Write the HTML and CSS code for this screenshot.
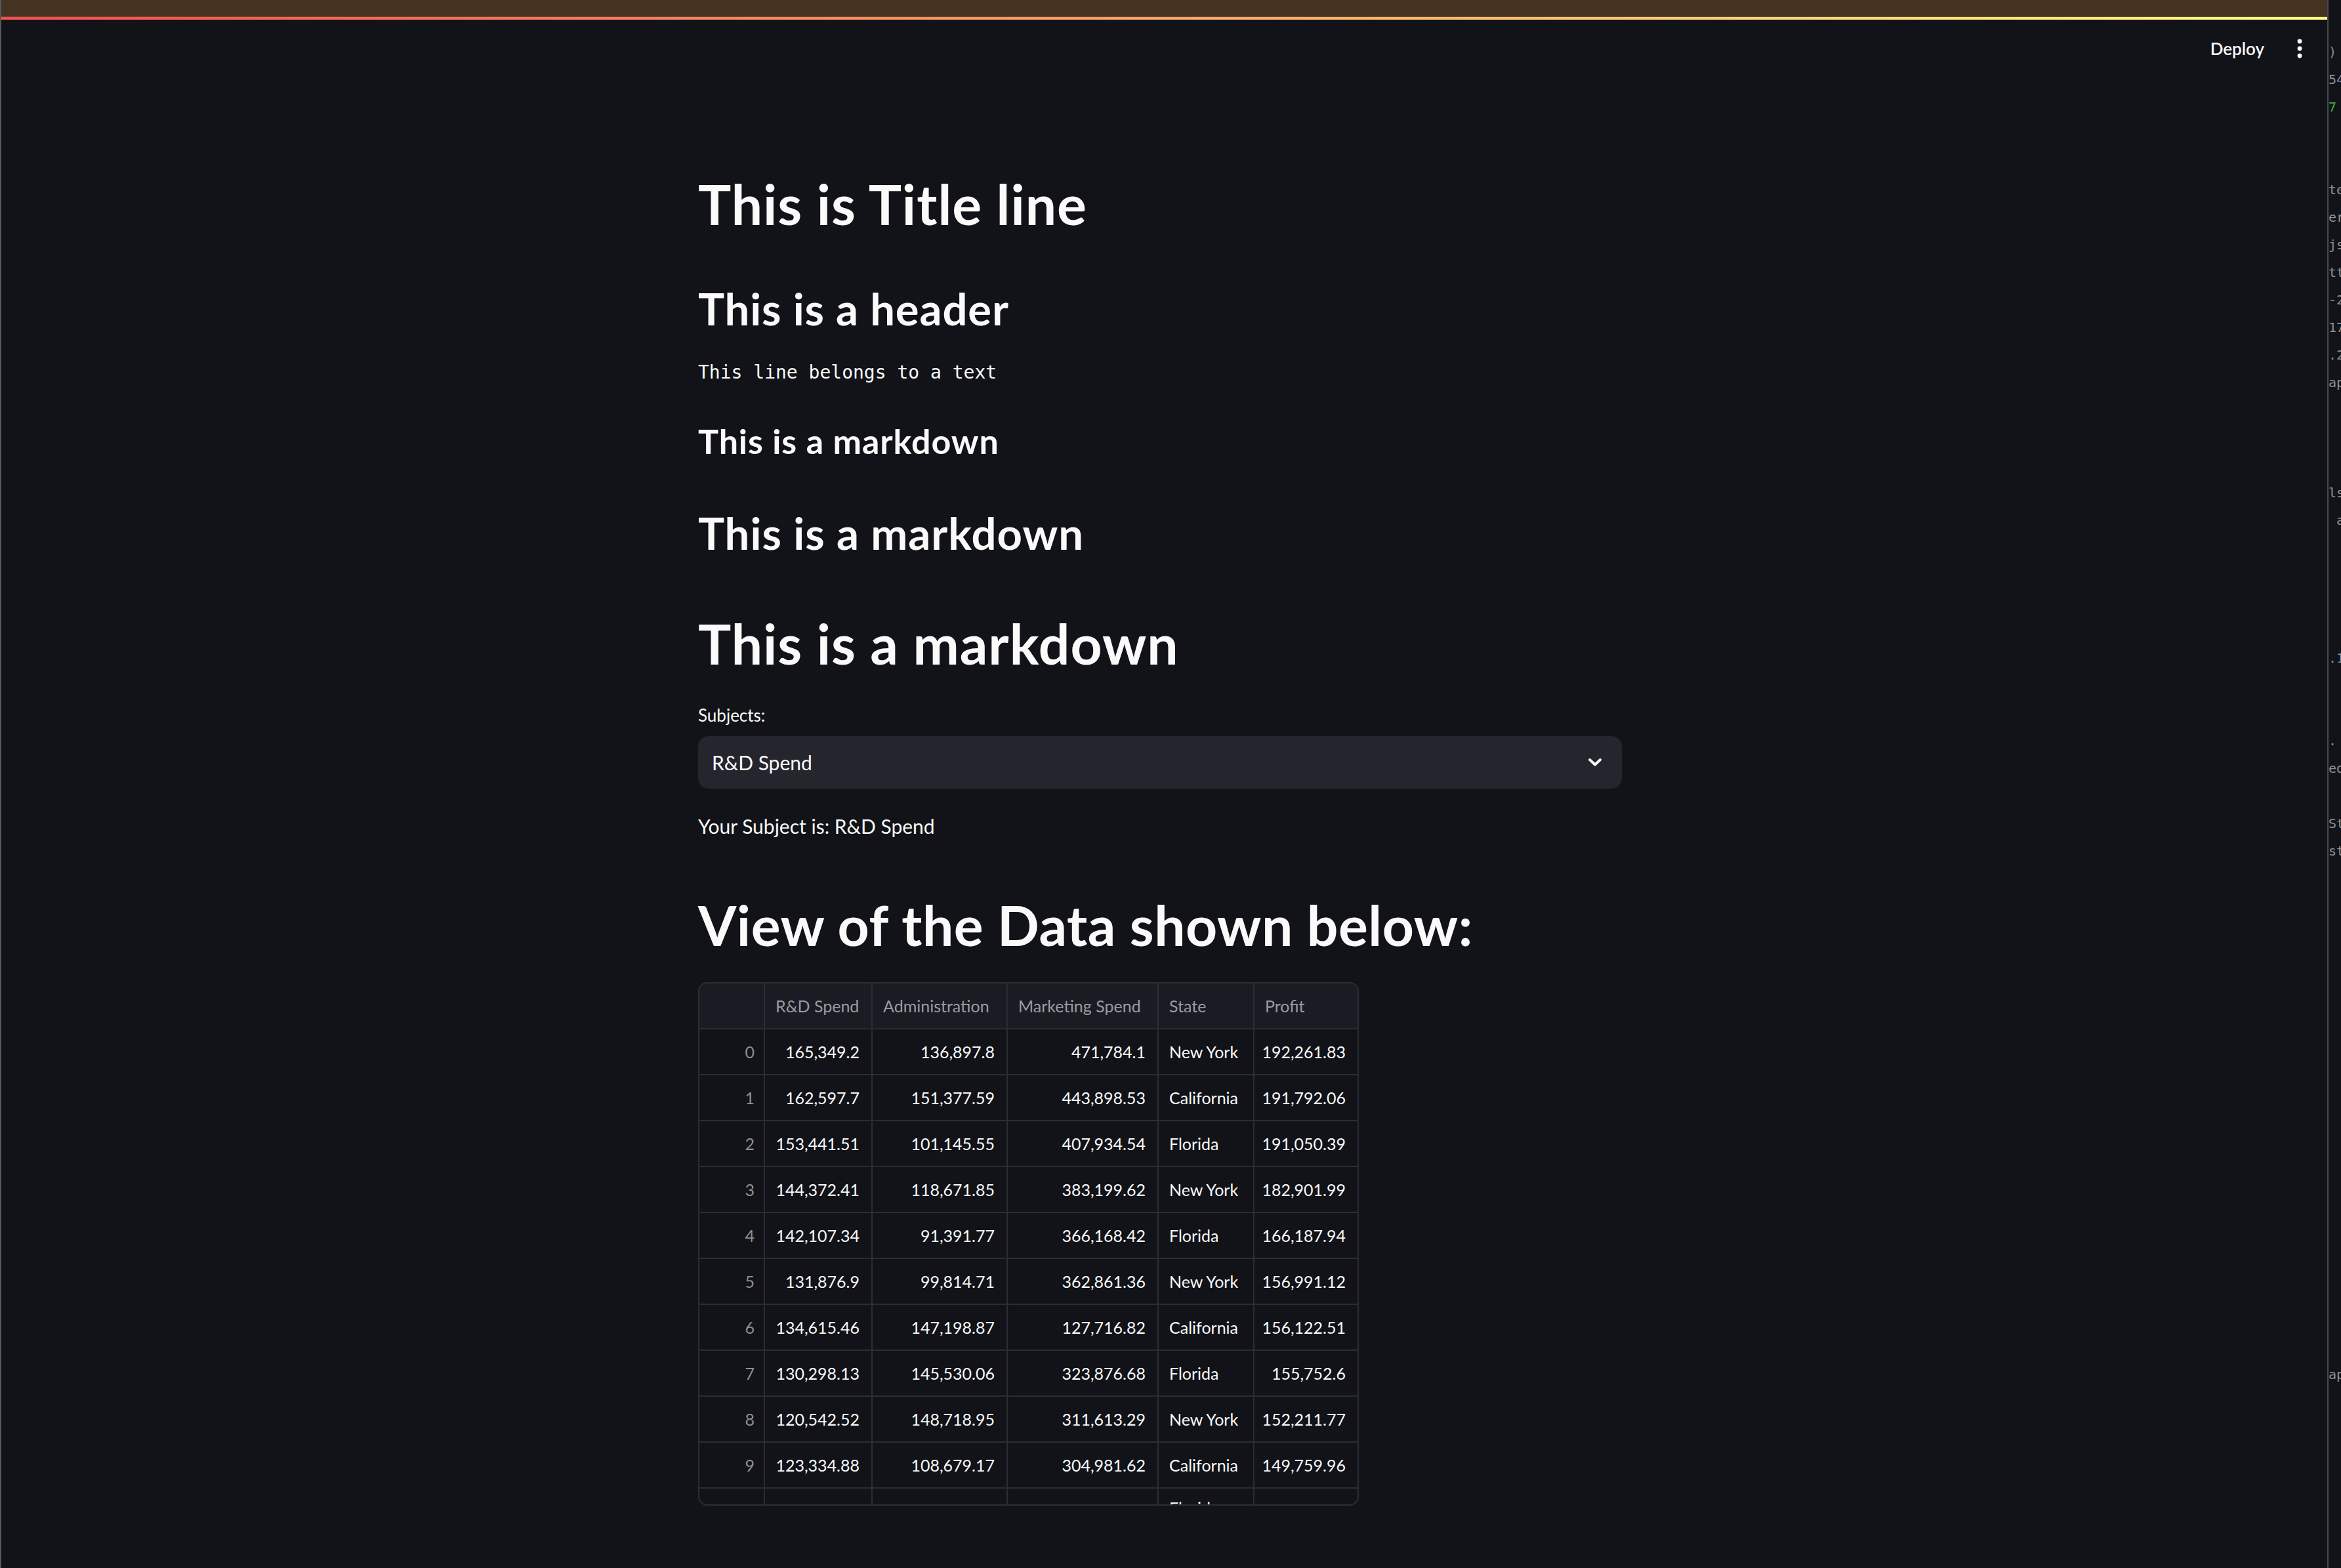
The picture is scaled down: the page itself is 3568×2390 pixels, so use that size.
FILE: index.html
```html
<!DOCTYPE html>
<html lang="en">
<head>
  <meta charset="UTF-8" />
  <meta name="viewport" content="width=device-width, initial-scale=1.0"/>
  <title>Streamlit app</title>
  <link rel="stylesheet" href="styles.css">
</head>
<body>

  <div class="screen">
    <div class="app">
      <div class="os-bar"></div>
      <div class="decoration"></div>

      <header class="toolbar">
        <button class="deploy-btn">Deploy</button>
        <button class="menu-btn" aria-label="Main menu">
          <svg width="10" height="30" viewBox="0 0 10 30">
            <circle cx="5" cy="4" r="3.4" fill="#fafafa"/>
            <circle cx="5" cy="15" r="3.4" fill="#fafafa"/>
            <circle cx="5" cy="26" r="3.4" fill="#fafafa"/>
          </svg>
        </button>
      </header>

      <main class="block">
        <h1 class="title">This is Title line</h1>
        <h2 class="header">This is a header</h2>
        <pre class="plain-text">This line belongs to a text</pre>
        <h3 class="md-h3">This is a markdown</h3>
        <h2 class="md-h2">This is a markdown</h2>
        <h1 class="md-h1">This is a markdown</h1>

        <label class="select-label">Subjects:</label>
        <div class="select">
          <span class="select-value">R&amp;D Spend</span>
          <svg class="select-arrow" width="22" height="14" viewBox="0 0 22 14">
            <polyline points="3,3 11,10.5 19,3" fill="none" stroke="#fafafa" stroke-width="4" stroke-linecap="round" stroke-linejoin="round"/>
          </svg>
        </div>

        <p class="result">Your Subject is: R&amp;D Spend</p>

        <h1 class="data-title">View of the Data shown below:</h1>

        <div class="dataframe">
          <div class="df-row df-head">
            <div class="df-cell"></div>
            <div class="df-cell">R&amp;D Spend</div>
            <div class="df-cell">Administration</div>
            <div class="df-cell">Marketing Spend</div>
            <div class="df-cell">State</div>
            <div class="df-cell">Profit</div>
          </div>
          <div class="df-row">
            <div class="df-cell df-index">0</div>
            <div class="df-cell num">165,349.2</div>
            <div class="df-cell num">136,897.8</div>
            <div class="df-cell num">471,784.1</div>
            <div class="df-cell">New York</div>
            <div class="df-cell num">192,261.83</div>
          </div>
          <div class="df-row">
            <div class="df-cell df-index">1</div>
            <div class="df-cell num">162,597.7</div>
            <div class="df-cell num">151,377.59</div>
            <div class="df-cell num">443,898.53</div>
            <div class="df-cell">California</div>
            <div class="df-cell num">191,792.06</div>
          </div>
          <div class="df-row">
            <div class="df-cell df-index">2</div>
            <div class="df-cell num">153,441.51</div>
            <div class="df-cell num">101,145.55</div>
            <div class="df-cell num">407,934.54</div>
            <div class="df-cell">Florida</div>
            <div class="df-cell num">191,050.39</div>
          </div>
          <div class="df-row">
            <div class="df-cell df-index">3</div>
            <div class="df-cell num">144,372.41</div>
            <div class="df-cell num">118,671.85</div>
            <div class="df-cell num">383,199.62</div>
            <div class="df-cell">New York</div>
            <div class="df-cell num">182,901.99</div>
          </div>
          <div class="df-row">
            <div class="df-cell df-index">4</div>
            <div class="df-cell num">142,107.34</div>
            <div class="df-cell num">91,391.77</div>
            <div class="df-cell num">366,168.42</div>
            <div class="df-cell">Florida</div>
            <div class="df-cell num">166,187.94</div>
          </div>
          <div class="df-row">
            <div class="df-cell df-index">5</div>
            <div class="df-cell num">131,876.9</div>
            <div class="df-cell num">99,814.71</div>
            <div class="df-cell num">362,861.36</div>
            <div class="df-cell">New York</div>
            <div class="df-cell num">156,991.12</div>
          </div>
          <div class="df-row">
            <div class="df-cell df-index">6</div>
            <div class="df-cell num">134,615.46</div>
            <div class="df-cell num">147,198.87</div>
            <div class="df-cell num">127,716.82</div>
            <div class="df-cell">California</div>
            <div class="df-cell num">156,122.51</div>
          </div>
          <div class="df-row">
            <div class="df-cell df-index">7</div>
            <div class="df-cell num">130,298.13</div>
            <div class="df-cell num">145,530.06</div>
            <div class="df-cell num">323,876.68</div>
            <div class="df-cell">Florida</div>
            <div class="df-cell num">155,752.6</div>
          </div>
          <div class="df-row">
            <div class="df-cell df-index">8</div>
            <div class="df-cell num">120,542.52</div>
            <div class="df-cell num">148,718.95</div>
            <div class="df-cell num">311,613.29</div>
            <div class="df-cell">New York</div>
            <div class="df-cell num">152,211.77</div>
          </div>
          <div class="df-row">
            <div class="df-cell df-index">9</div>
            <div class="df-cell num">123,334.88</div>
            <div class="df-cell num">108,679.17</div>
            <div class="df-cell num">304,981.62</div>
            <div class="df-cell">California</div>
            <div class="df-cell num">149,759.96</div>
          </div>
          <!-- next row is scrolled out of view, only the tops of its letters show -->
          <div class="df-row df-partial">
            <div class="df-cell df-index"></div>
            <div class="df-cell num"></div>
            <div class="df-cell num"></div>
            <div class="df-cell num"></div>
            <div class="df-cell">Florida</div>
            <div class="df-cell num"></div>
          </div>
        </div>
      </main>
    </div>

    <!-- the code editor window peeking in on the right -->
    <pre class="editor">)
54
<span class="code-green">7</span>


te
er
js
tt
-2
17
.2
ap



ls
 a




.1


.
ed

St
st


















ap</pre>
  </div>

</body>
</html>
```

FILE: styles.css
```css
* {
  box-sizing: border-box;
}

body {
  margin: 0;
  background: #111318;
  color: #fafafa;
  font-family: Lato, "Noto Sans", sans-serif;
}

.screen {
  display: flex;
  height: 2390px;
  border-left: 2px solid #56585d;
  overflow: hidden;
}

.app {
  flex: 1;
  display: flex;
  flex-direction: column;
}

.os-bar {
  height: 26px;
  background: #443320;
  border-bottom: 2px solid #574839;
}

.decoration {
  height: 4px;
  background: linear-gradient(90deg, #ff4b4b, #fffd80);
}

.toolbar {
  height: 88px;
  display: flex;
  align-items: center;
  justify-content: flex-end;
  gap: 40px;
  padding-right: 28px;
}

.deploy-btn {
  background: none;
  border: none;
  color: #fafafa;
  font-family: inherit;
  font-size: 26px;
  font-weight: 600;
  padding: 0;
  cursor: pointer;
}

.menu-btn {
  background: none;
  border: none;
  padding: 0 9px;
  display: flex;
  cursor: pointer;
}

.block {
  width: 1408px;
  margin-left: 1062px;
  padding-top: 143px;
  display: flex;
  flex-direction: column;
  align-items: flex-start;
}

.block h1,
.block h2,
.block h3,
.block p,
.block pre {
  margin: 0;
}

.title {
  font-size: 84px;
  font-weight: 700;
  letter-spacing: 1px;
  line-height: 100px;
}

.header {
  margin-top: 69px !important;
  font-size: 67px;
  font-weight: 700;
  letter-spacing: 0.9px;
  line-height: 80px;
}

.plain-text {
  margin-top: 38px !important;
  font-family: "DejaVu Sans Mono", "Liberation Mono", monospace;
  font-size: 28px;
  line-height: 40px;
}

.md-h3 {
  margin-top: 52px !important;
  font-size: 52px;
  font-weight: 700;
  letter-spacing: 0.9px;
  line-height: 64px;
}

.md-h2 {
  margin-top: 68px !important;
  font-size: 67px;
  font-weight: 700;
  letter-spacing: 1px;
  line-height: 80px;
}

.md-h1 {
  margin-top: 79px !important;
  font-size: 84px;
  font-weight: 700;
  letter-spacing: 1px;
  line-height: 100px;
}

.select-label {
  margin-top: 41px;
  font-size: 26px;
  line-height: 36px;
}

.select {
  margin-top: 14px;
  width: 100%;
  height: 80px;
  background: #25262d;
  border-radius: 16px;
  display: flex;
  align-items: center;
  justify-content: space-between;
  padding: 0 30px 0 21px;
}

.select-value {
  font-size: 30px;
}

.result {
  margin-top: 35px !important;
  font-size: 30px;
  line-height: 44px;
}

.data-title {
  margin-top: 79px !important;
  font-size: 84px;
  font-weight: 700;
  letter-spacing: 0.5px;
  line-height: 100px;
}

.dataframe {
  margin-top: 37px;
  width: 1007px;
  height: 798px;
  border: 2px solid #2b2d33;
  border-radius: 14px;
  overflow: hidden;
}

.df-row {
  display: grid;
  grid-template-columns: 100px 164px 206px 230px 146px 157px;
  height: 70px;
  border-bottom: 2px solid #2b2d33;
}

.df-cell {
  display: flex;
  align-items: center;
  padding: 0 16px;
  font-size: 25px;
  color: #fafafa;
  border-right: 2px solid #2b2d33;
  white-space: nowrap;
}

.df-cell:last-child {
  border-right: none;
}

.df-cell.num {
  justify-content: flex-end;
  padding-right: 18px;
}

.df-index {
  justify-content: flex-end;
  padding-right: 14px;
  color: #8d8f96;
}

.df-head {
  background: #1a1c23;
}

.df-head .df-cell {
  color: #9a9ba2;
}

.df-partial .df-cell {
  align-items: flex-start;
  padding-top: 14px;
}

.editor {
  width: 21px;
  margin: 0;
  padding-top: 58px;
  border-left: 2px solid #46494f;
  overflow: hidden;
  font-family: "DejaVu Sans Mono", monospace;
  font-size: 20px;
  line-height: 42px;
  color: #8e9197;
  white-space: pre;
}

.code-green {
  color: #3fae4a;
}
```
